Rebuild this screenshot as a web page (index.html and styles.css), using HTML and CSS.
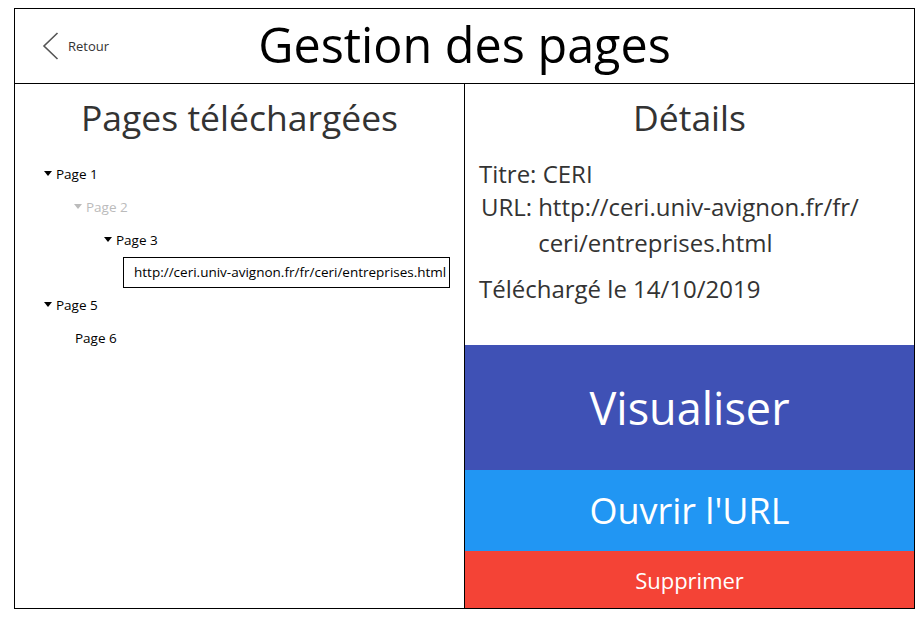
FILE: index.html
```html
<!DOCTYPE html>
<html lang="fr">
<head>
<meta charset="utf-8">
<title>Gestion des pages</title>
<link rel="stylesheet" href="styles.css">
</head>
<body>
<div class="frame">
  <header class="header">
    <a class="back" href="#">
      <svg class="chevron" width="17" height="28" viewBox="0 0 17 28"><polyline points="15.5,1 2,14 15.5,27" fill="none" stroke="#555" stroke-width="1.6"/></svg>
      <span>Retour</span>
    </a>
    <h1 class="title">Gestion des pages</h1>
    <div></div>
  </header>
  <main class="body">
    <section class="left">
      <h2 class="panel-title">Pages téléchargées</h2>
      <ul class="tree">
        <li class="node lvl0 open">Page 1</li>
        <li class="node lvl1 open muted">Page 2</li>
        <li class="node lvl2 open">Page 3</li>
        <li class="url-row"><span class="url-box">http://ceri.univ-avignon.fr/fr/ceri/entreprises.html</span></li>
        <li class="node lvl0 open">Page 5</li>
        <li class="node lvl0 leaf">Page 6</li>
      </ul>
    </section>
    <section class="right">
      <div class="details">
        <h2 class="panel-title">Détails</h2>
        <p class="line titre">Titre: CERI</p>
        <div class="line url-line"><span class="label">URL:</span><span class="value">http://ceri.univ-avignon.fr/fr/<br>ceri/entreprises.html</span></div>
        <p class="line date">Téléchargé le 14/10/2019</p>
      </div>
      <button class="btn btn-view">Visualiser</button>
      <button class="btn btn-open">Ouvrir l'URL</button>
      <button class="btn btn-delete">Supprimer</button>
    </section>
  </main>
</div>
</body>
</html>
```
FILE: styles.css
```css
* { box-sizing: border-box; }
html, body { margin: 0; padding: 0; background: #fff; }
body { font-family: "Open Sans", "Noto Sans", sans-serif; color: #000; }

.frame {
  margin: 8px 0 0 14px;
  width: 901px;
  height: 601px;
  border: 1px solid #000;
  display: flex;
  flex-direction: column;
}

.header {
  height: 75px;
  border-bottom: 1px solid #000;
  display: grid;
  grid-template-columns: 1fr auto 1fr;
  align-items: center;
}
.back {
  display: flex;
  align-items: center;
  gap: 9px;
  padding-left: 27px;
  color: #333;
  text-decoration: none;
  font-size: 13px;
}
.chevron { display: block; }
.title {
  margin: 0;
  font-size: 48.5px;
  font-weight: 400;
  line-height: 1;
  color: #000;
  padding-bottom: 4px;
}

.body {
  flex: 1;
  display: flex;
  min-height: 0;
}
.left {
  width: 450px;
  border-right: 1px solid #000;
  display: flex;
  flex-direction: column;
}
.right {
  flex: 1;
  display: flex;
  flex-direction: column;
}
.panel-title {
  margin: 0;
  height: 70px;
  display: flex;
  align-items: center;
  justify-content: center;
  font-size: 35.5px;
  font-weight: 400;
  color: #333;
  padding-bottom: 4px;
}

.tree {
  list-style: none;
  margin: 0;
  padding: 3px 0 0 0;
  font-size: 13.5px;
}
.tree li {
  height: 33px;
  display: flex;
  align-items: center;
}
.node::before {
  content: "";
  width: 0;
  height: 0;
  border-left: 4px solid transparent;
  border-right: 4px solid transparent;
  border-top: 5px solid currentColor;
  margin-right: 4px;
}
.node.leaf::before { width: 8px; border: 0; margin-right: 4px; }
.lvl0 { padding-left: 29px; }
.lvl1 { padding-left: 59px; }
.lvl2 { padding-left: 89px; }
.leaf.lvl0 { padding-left: 48px; }
.muted { color: #bbb; }
.tree .url-row { padding-left: 108px; height: 32px; }
.url-box {
  display: block;
  border: 1px solid #000;
  height: 31px;
  line-height: 29px;
  padding: 0 0 0 10px;
  width: 327px;
  white-space: nowrap;
  overflow: hidden;
}

.details {
  flex: 1;
  padding: 0 0 0 14px;
  color: #333;
  font-size: 24px;
}
.details .panel-title { margin-left: -14px; }
.line { margin: 0; }
.titre { margin-top: 5px; line-height: 30px; }
.url-line { display: flex; line-height: 36px; padding-left: 2px; }
.url-line .label { margin-right: 6px; }
.date { margin-top: 11px; line-height: 33px; }

.btn {
  border: 0;
  margin: 0;
  width: 100%;
  color: #fff;
  font-family: inherit;
  font-weight: 400;
  display: flex;
  align-items: center;
  justify-content: center;
  padding: 0;
}
.btn-view { height: 125px; background: #3f51b5; font-size: 45px; }
.btn-open { height: 81px; background: #2196f3; font-size: 36px; }
.btn-delete { height: 57px; background: #f44336; font-size: 22px; }
```
